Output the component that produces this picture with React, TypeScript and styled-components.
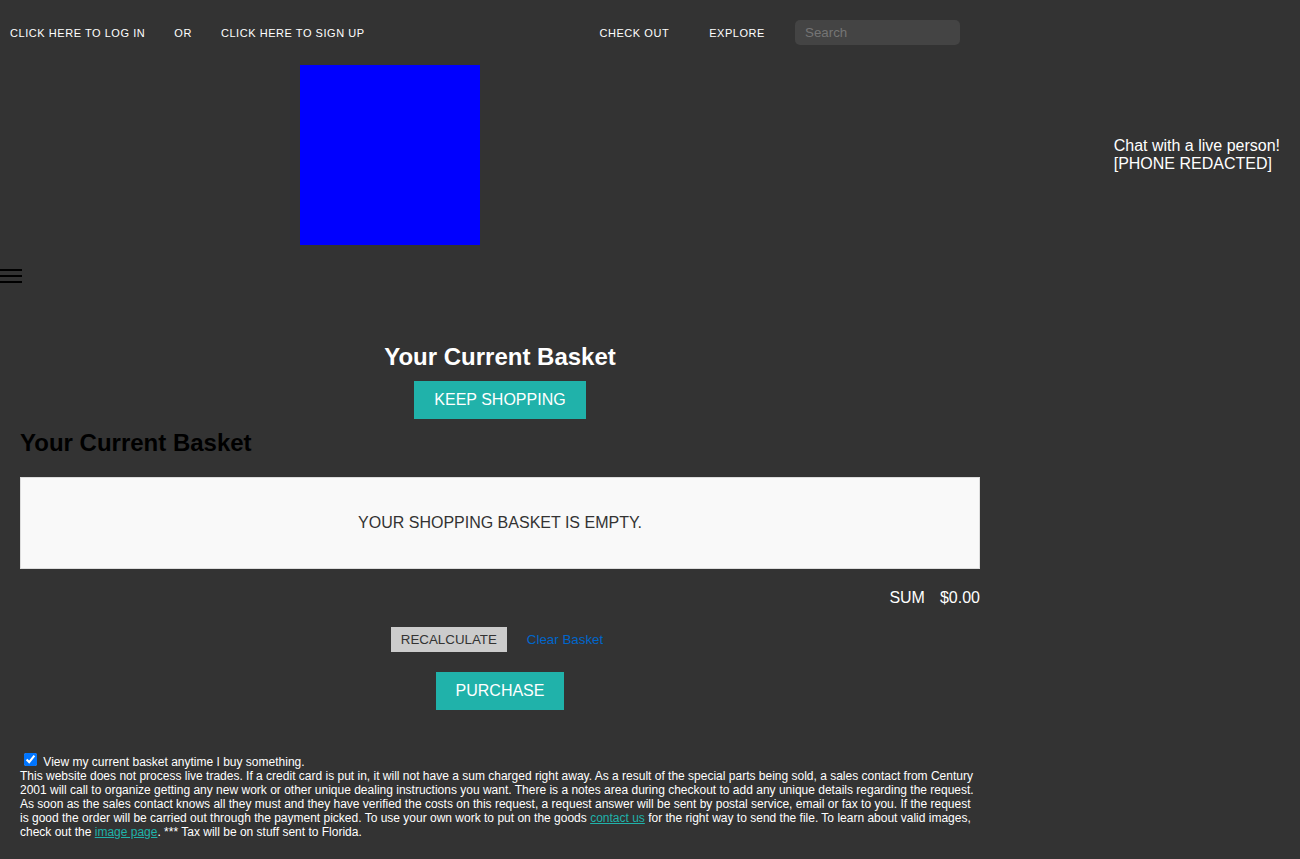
import React from "react";
import styled, { createGlobalStyle } from "styled-components";

const GlobalStyle = createGlobalStyle`
  *, *::before, *::after { box-sizing: border-box; }
  body {
    margin: 0;
    background: #333;
    color: #fff;
    font-family: Arial, "Liberation Sans", sans-serif;
    font-size: 16px;
  }
`;

const NavBar = styled.nav`
  display: flex;
  justify-content: space-between;
  align-items: center;
  max-width: 960px;
  padding: 20px 0 20px 10px;
  font-size: 11px;
  font-weight: 500;
  letter-spacing: 0.05em;
  text-transform: uppercase;
`;

const NavGroup = styled.div<{ $gap: number }>`
  display: flex;
  align-items: center;
  gap: ${(p) => p.$gap}px;
`;

const NavLink = styled.a`
  color: inherit;
  text-decoration: none;
`;

const SearchForm = styled.form`
  display: flex;
  align-items: center;
  gap: 30px;
`;

const SearchInput = styled.input`
  width: 165px;
  height: 25px;
  padding: 5px 10px;
  border: 0;
  border-radius: 5px;
  background: #444;
  color: #fff;
  font-family: inherit;

  &::placeholder {
    color: #757575;
  }
`;

const Banner = styled.header`
  display: flex;
  justify-content: space-between;
  align-items: center;
  padding: 0 20px 0 300px;
`;

const Logo = styled.div`
  width: 180px;
  height: 180px;
  background: #00f;
`;

const ChatNote = styled.p`
  margin: 0;
  line-height: 18px;
`;

const MenuButton = styled.button`
  display: flex;
  flex-direction: column;
  gap: 4px;
  margin: 24px 0 40px;
  padding: 0;
  border: 0;
  background: none;
`;

const MenuLine = styled.span`
  width: 22px;
  height: 2px;
  background: #000;
`;

const Main = styled.main`
  display: flex;
  flex-direction: column;
  max-width: 1000px;
  padding: 20px;
`;

const Title = styled.h1`
  margin: 0 0 10px;
  font-size: 24px;
  line-height: 28px;
  text-align: center;
`;

const SectionTitle = styled.h2`
  margin: 10px 0 20px;
  color: #000;
  font-size: 24px;
  line-height: 28px;
`;

const ActionButton = styled.button`
  align-self: center;
  padding: 10px 20px;
  border: 0;
  background: #20b2aa;
  color: #fff;
  font-family: inherit;
  font-size: 16px;
  line-height: 18px;
  text-transform: uppercase;
`;

const EmptyBasket = styled.p`
  margin: 0;
  padding: 36px 20px;
  border: 1px solid #ddd;
  background: #f9f9f9;
  color: #333;
  line-height: 18px;
  text-align: center;
  text-transform: uppercase;
`;

const SumRow = styled.div`
  display: flex;
  justify-content: flex-end;
  gap: 15px;
  padding: 20px 0;
  line-height: 18px;
`;

const BasketActions = styled.div`
  display: flex;
  justify-content: center;
  gap: 14px;
  padding-bottom: 20px;
`;

const SmallButton = styled.button`
  padding: 5px 10px;
  border: 0;
  background: #ccc;
  color: #333;
  font-family: inherit;
  line-height: 15px;
  text-transform: uppercase;
`;

const ClearButton = styled.button`
  padding: 5px 6px;
  border: 0;
  background: none;
  color: #06c;
  font-family: inherit;
  line-height: 15px;
`;

const Notes = styled.section`
  padding-top: 40px;
  font-size: 12px;
  line-height: 14px;
`;

const Paragraph = styled.p`
  margin: 0;
`;

const InlineLink = styled.a`
  color: #20b2aa;
`;

export default function App() {
  return (
    <>
      <GlobalStyle />
      <NavBar>
        <NavGroup $gap={29}>
          <NavLink href="#login">Click here to log in</NavLink>
          <span>or</span>
          <NavLink href="#signup">Click here to sign up</NavLink>
        </NavGroup>
        <SearchForm role="search">
          <NavGroup $gap={40}>
            <NavLink href="#checkout">Check out</NavLink>
            <NavLink href="#explore">Explore</NavLink>
          </NavGroup>
          <SearchInput type="search" placeholder="Search" aria-label="Search" />
        </SearchForm>
      </NavBar>
      <Banner>
        <Logo />
        <ChatNote>
          Chat with a live person!
          <br />
          [PHONE REDACTED]
        </ChatNote>
      </Banner>
      <MenuButton type="button" aria-label="Menu">
        <MenuLine />
        <MenuLine />
        <MenuLine />
      </MenuButton>
      <Main>
        <Title>Your Current Basket</Title>
        <ActionButton type="button">Keep shopping</ActionButton>
        <SectionTitle>Your Current Basket</SectionTitle>
        <EmptyBasket>Your shopping basket is empty.</EmptyBasket>
        <SumRow>
          <span>SUM</span>
          <span>$0.00</span>
        </SumRow>
        <BasketActions>
          <SmallButton type="button">Recalculate</SmallButton>
          <ClearButton type="button">Clear Basket</ClearButton>
        </BasketActions>
        <ActionButton type="button">Purchase</ActionButton>
        <Notes>
          <input type="checkbox" id="view-basket" defaultChecked />{" "}
          <label htmlFor="view-basket">View my current basket anytime I buy something.</label>
          <Paragraph>
            This website does not process live trades. If a credit card is put in, it will not have a sum charged
            right away. As a result of the special parts being sold, a sales contact from Century 2001 will call to
            organize getting any new work or other unique dealing instructions you want. There is a notes area during
            checkout to add any unique details regarding the request. As soon as the sales contact knows all they must
            and they have verified the costs on this request, a request answer will be sent by postal service, email
            or fax to you. If the request is good the order will be carried out through the payment picked. To use
            your own work to put on the goods <InlineLink href="#contact">contact us</InlineLink> for the right way to
            send the file. To learn about valid images, check out the <InlineLink href="#images">image page</InlineLink>.
            *** Tax will be on stuff sent to Florida.
          </Paragraph>
        </Notes>
      </Main>
    </>
  );
}
